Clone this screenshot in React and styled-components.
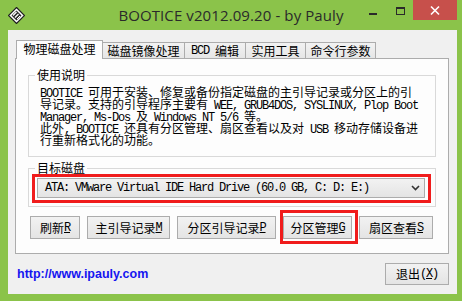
import React from 'react';
import styled, { createGlobalStyle } from 'styled-components';

const Global = createGlobalStyle`
  html, body { margin: 0; padding: 0; }
  body { background: #8bc34a; font-family: "Noto Sans CJK SC", sans-serif; }
  * { box-sizing: border-box; }
`;

const Window = styled.div`
  width: 462px;
  height: 301px;
  background: #8bc34a;
  display: flex;
  flex-direction: column;
  overflow: hidden;
`;

const TitleBar = styled.div`
  height: 30px;
  flex: none;
  display: grid;
  grid-template-columns: 1fr auto 1fr;
  align-items: start;
`;

const AppIcon = styled.svg`
  display: block;
  margin: 7px 0 0 8px;
`;

const Title = styled.div`
  font-family: "Open Sans", sans-serif;
  font-size: 15px;
  letter-spacing: 0.1px;
  line-height: 30px;
  color: #2a2a2a;
  white-space: nowrap;
`;

const Caption = styled.div`
  justify-self: end;
  display: flex;
  margin-right: 5px;
`;

const CapBtn = styled.div`
  width: ${(p) => p.$w}px;
  height: 20px;
  background: ${(p) => p.$bg || 'transparent'};
  svg { display: block; }
`;

const Client = styled.div`
  flex: 1;
  margin: 0 5px 7px 8px;
  background: #f0f0f0;
  display: flex;
  flex-direction: column;
`;

const TabControl = styled.div`
  margin: 10px 0 0 7px;
  width: 434px;
`;

const TabStrip = styled.div`
  height: 18px;
  display: flex;
  align-items: flex-start;
  padding-left: 1px;
  position: relative;
  z-index: 1;
`;

const Tab = styled.div`
  width: ${(p) => p.$w}px;
  height: ${(p) => (p.$active ? 19 : 16)}px;
  margin-top: ${(p) => (p.$active ? 0 : 2)}px;
  margin-left: ${(p) => (p.$first ? 0 : -1)}px;
  border: 1px solid #acacac;
  border-bottom: none;
  background: ${(p) => (p.$active ? '#fdfdfd' : 'linear-gradient(#f2f2f2, #e6e6e6)')};
  position: relative;
  z-index: ${(p) => (p.$active ? 2 : 1)};
  display: flex;
  align-items: center;
  justify-content: center;
  padding-bottom: ${(p) => (p.$active ? 2 : 0)}px;
  font-size: 12px;
  line-height: 12px;
  color: #000;
  white-space: nowrap;
`;

const Panel = styled.div`
  height: 196px;
  border: 1px solid #acacac;
  background: #fdfdfd;
  display: flex;
  flex-direction: column;
`;

const Group = styled.fieldset`
  margin: ${(p) => p.$mt}px 0 0 12px;
  width: 408px;
  padding: 0;
  border: 1px solid #d9d9d9;
  min-inline-size: 0;
`;

const Legend = styled.legend`
  margin-left: 6px;
  padding: 0 2px;
  font-size: 12px;
  line-height: 12px;
  color: #000;
`;

const GroupBody = styled.div`
  padding: ${(p) => p.$pad};
`;

const Line = styled.div`
  height: 12px;
  font-size: 12px;
  line-height: 12px;
  white-space: nowrap;
  color: #000;
`;

const Lat = styled.span`
  font-family: "Liberation Mono", monospace;
  font-size: 12px;
  letter-spacing: -1.2px;
  white-space: pre;
  text-decoration: ${(p) => (p.$key ? 'underline' : 'none')};
`;

const Highlight = styled.div`
  position: relative;
  &::after {
    content: '';
    position: absolute;
    inset: ${(p) => p.$inset};
    border: 3px solid #f01c1c;
    pointer-events: none;
  }
`;

const Combo = styled.div`
  height: 20px;
  border: 1px solid #acacac;
  background: linear-gradient(#f2f2f2, #e4e4e4);
  display: flex;
  align-items: center;
  justify-content: space-between;
  padding: 0 4px 0 7px;
  font-size: 12px;
  line-height: 12px;
`;

const ButtonRow = styled.div`
  display: flex;
  gap: 7px;
  margin: 9px 0 0 14px;
`;

const Button = styled.div`
  width: ${(p) => p.$w}px;
  height: ${(p) => p.$h || 23}px;
  border: 1px solid #acacac;
  background: linear-gradient(#f2f2f2, #e4e4e4);
  display: flex;
  align-items: center;
  justify-content: center;
  font-size: 12px;
  line-height: 12px;
  color: #000;
  white-space: nowrap;
`;

const Footer = styled.div`
  flex: 1;
  display: flex;
  align-items: center;
  justify-content: space-between;
  padding: 0 8px 0 9px;
`;

const Link = styled.a`
  font-family: "Liberation Sans", Arial, sans-serif;
  font-weight: bold;
  font-size: 12.5px;
  color: #1515f0;
  text-decoration: none;
`;

const isAscii = (s) => /^[\x00-\x7f]+$/.test(s);
const Mixed = ({ text }) =>
  text
    .split(/([\x00-\x7f]+)/)
    .filter(Boolean)
    .map((s, i) => (isAscii(s) ? <Lat key={i}>{s}</Lat> : <React.Fragment key={i}>{s}</React.Fragment>));

const Label = ({ text, hot, after = '' }) => (
  <>
    <Mixed text={text} />
    {hot && <Lat $key>{hot}</Lat>}
    {after && <Lat>{after}</Lat>}
  </>
);

const tabs = [
  { label: '物理磁盘处理', w: 87, active: true },
  { label: '磁盘镜像处理', w: 83 },
  { label: 'BCD 编辑', w: 62 },
  { label: '实用工具', w: 61 },
  { label: '命令行参数', w: 71 },
];

const usage = [
  'BOOTICE 可用于安装、修复或备份指定磁盘的主引导记录或分区上的引',
  '导记录。支持的引导程序主要有 WEE, GRUB4DOS, SYSLINUX, Plop Boot',
  'Manager, Ms-Dos 及 Windows NT 5/6 等。',
  '此外, BOOTICE 还具有分区管理、扇区查看以及对 USB 移动存储设备进',
  '行重新格式化的功能。',
];

export default function App() {
  return (
    <>
      <Global />
      <Window>
        <TitleBar>
          <AppIcon width="17" height="17" viewBox="0 0 17 17">
            <polygon points="8.5,0.5 16.5,8.5 8.5,16.5 0.5,8.5" fill="#fff" stroke="#1e1e1e" strokeWidth="1.2" />
            <polygon points="8.5,3.5 13.5,8.5 8.5,13.5 3.5,8.5" fill="#2a2a2a" />
            <line x1="5" y1="8.5" x2="8.5" y2="5" stroke="#fff" strokeWidth="1.2" />
            <line x1="7" y1="10.5" x2="10.5" y2="7" stroke="#fff" strokeWidth="1.2" />
            <line x1="9" y1="12" x2="12" y2="9" stroke="#fff" strokeWidth="1" />
          </AppIcon>
          <Title>BOOTICE v2012.09.20 - by Pauly</Title>
          <Caption>
            <CapBtn $w={27}>
              <svg width="27" height="20">
                <rect x="9" y="13" width="8" height="2" fill="#2a2a2a" />
              </svg>
            </CapBtn>
            <CapBtn $w={26}>
              <svg width="26" height="20">
                <rect x="9.5" y="7.5" width="8" height="7" fill="none" stroke="#2a2a2a" strokeWidth="1" />
                <line x1="9" y1="8.5" x2="18" y2="8.5" stroke="#2a2a2a" strokeWidth="1" />
              </svg>
            </CapBtn>
            <CapBtn $w={44} $bg="#c7504b">
              <svg width="44" height="20">
                <path d="M18 6.5 L26 14.5 M26 6.5 L18 14.5" stroke="#fff" strokeWidth="1.6" />
              </svg>
            </CapBtn>
          </Caption>
        </TitleBar>
        <Client>
          <TabControl>
            <TabStrip>
              {tabs.map((t, i) => (
                <Tab key={t.label} $w={t.w} $active={t.active} $first={i === 0}>
                  <Mixed text={t.label} />
                </Tab>
              ))}
            </TabStrip>
            <Panel>
              <Group $mt={10}>
                <Legend>使用说明</Legend>
                <GroupBody $pad="5px 11px 10px 11px">
                  {usage.map((l) => (
                    <Line key={l}>
                      <Mixed text={l} />
                    </Line>
                  ))}
                </GroupBody>
              </Group>
              <Group $mt={5}>
                <Legend>目标磁盘</Legend>
                <GroupBody $pad="4px 10px 8px 8px">
                  <Highlight $inset="-4px -6px -5px -5px">
                    <Combo>
                      <Lat>ATA: VMware Virtual IDE Hard Drive (60.0 GB, C: D: E:)</Lat>
                      <svg width="9" height="6" viewBox="0 0 9 6">
                        <polyline points="1,1 4.5,4.5 8,1" fill="none" stroke="#333" strokeWidth="1.6" />
                      </svg>
                    </Combo>
                  </Highlight>
                </GroupBody>
              </Group>
              <ButtonRow>
                <Button $w={50}><Label text="刷新" hot="R" /></Button>
                <Button $w={83}><Label text="主引导记录" hot="M" /></Button>
                <Button $w={99}><Label text="分区引导记录" hot="P" /></Button>
                <Highlight $inset="-6px -6px -5px -3px">
                  <Button $w={69}><Label text="分区管理" hot="G" /></Button>
                </Highlight>
                <Button $w={74}><Label text="扇区查看" hot="S" /></Button>
              </ButtonRow>
            </Panel>
          </TabControl>
          <Footer>
            <Link href="#">http://www.ipauly.com</Link>
            <Button $w={64} $h={22}>
              <Mixed text="退出" />
              <Lat>(</Lat>
              <Lat $key>X</Lat>
              <Lat>)</Lat>
            </Button>
          </Footer>
        </Client>
      </Window>
    </>
  );
}
